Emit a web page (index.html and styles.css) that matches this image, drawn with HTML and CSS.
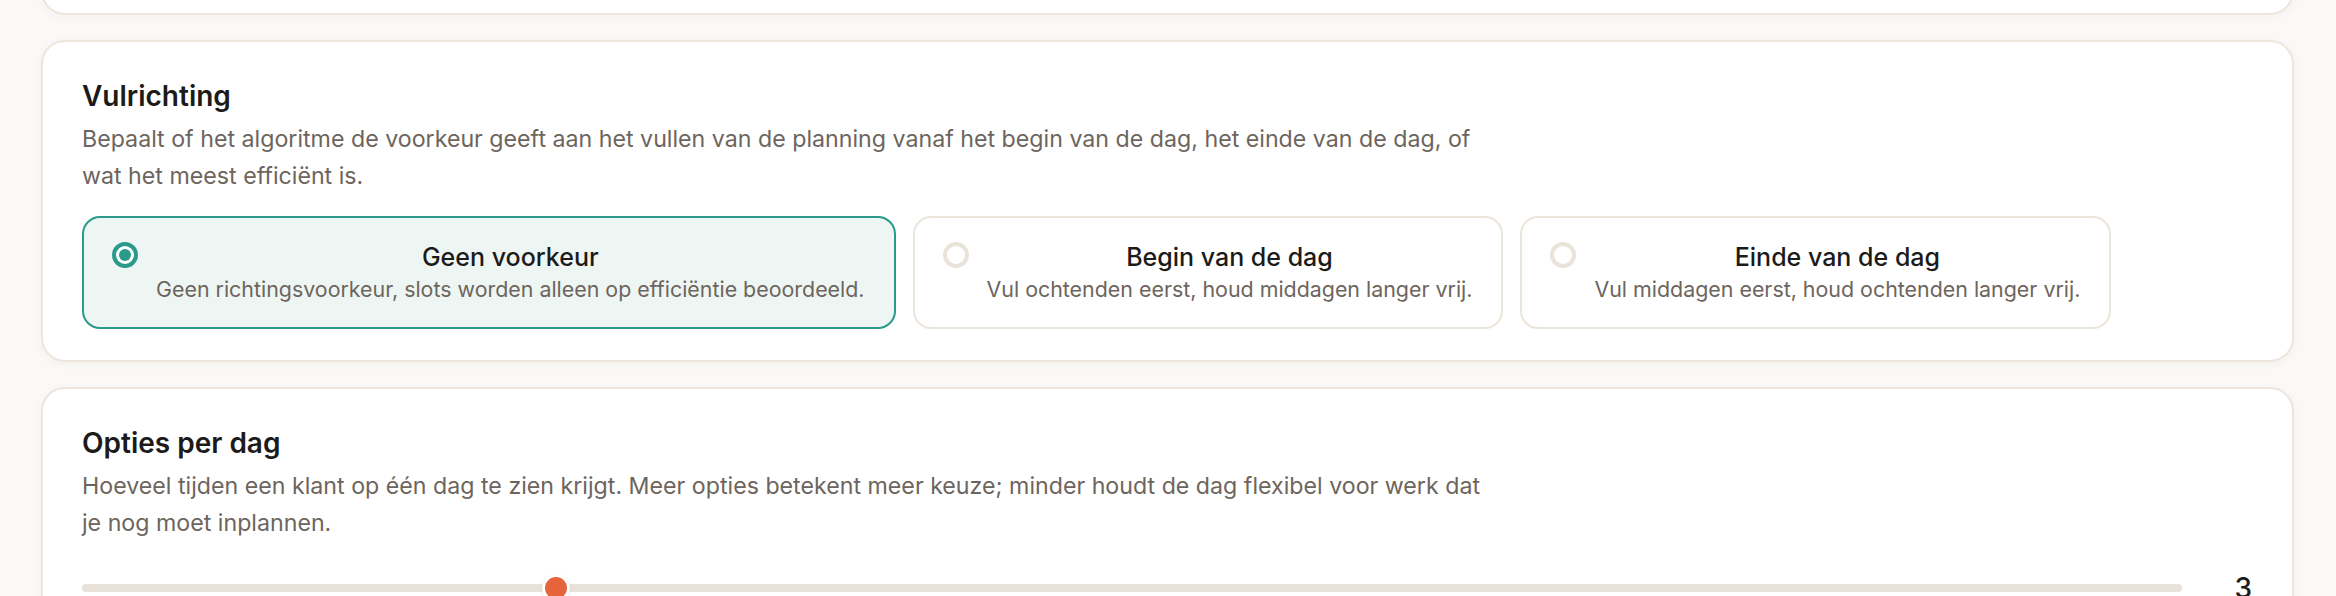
FILE: index.html
```html
<!DOCTYPE html>
<html lang="nl">
<head>
<meta charset="utf-8">
<title>Instellingen</title>
<link rel="stylesheet" href="styles.css">
</head>
<body>
<main class="page">
  <section class="card card-cut"></section>

  <section class="card">
    <h2 class="card-title">Vulrichting</h2>
    <p class="card-desc">Bepaalt of het algoritme de voorkeur geeft aan het vullen van de planning vanaf het begin van de dag, het einde van de dag, of wat het meest efficiënt is.</p>
    <div class="options">
      <div class="option option-active">
        <span class="radio radio-on"></span>
        <div class="option-body">
          <div class="option-title">Geen voorkeur</div>
          <div class="option-sub">Geen richtingsvoorkeur, slots worden alleen op efficiëntie beoordeeld.</div>
        </div>
      </div>
      <div class="option">
        <span class="radio"></span>
        <div class="option-body">
          <div class="option-title">Begin van de dag</div>
          <div class="option-sub">Vul ochtenden eerst, houd middagen langer vrij.</div>
        </div>
      </div>
      <div class="option">
        <span class="radio"></span>
        <div class="option-body">
          <div class="option-title">Einde van de dag</div>
          <div class="option-sub">Vul middagen eerst, houd ochtenden langer vrij.</div>
        </div>
      </div>
    </div>
  </section>

  <section class="card">
    <h2 class="card-title">Opties per dag</h2>
    <p class="card-desc">Hoeveel tijden een klant op één dag te zien krijgt. Meer opties betekent meer keuze; minder houdt de dag flexibel voor werk dat je nog moet inplannen.</p>
    <div class="slider-row">
      <input class="slider" type="range" min="1" max="10" value="3">
      <span class="slider-value">3</span>
    </div>
  </section>
</main>
</body>
</html>
```
FILE: styles.css
```css
html, body {
  margin: 0;
  padding: 0;
}
body {
  background: #faf9f7;
  font-family: Inter, "Noto Sans", sans-serif;
  color: #1c1b19;
  overflow: hidden;
}
.page {
  display: flex;
  flex-direction: column;
  gap: 25px;
  padding: 0 42px 0 41px;
  margin-top: -85px;
}
.card {
  background: #ffffff;
  border: 2px solid #ece6dd;
  border-radius: 24px;
  box-shadow: 0 2px 10px rgba(60, 40, 20, 0.04);
  padding: 35px 40px 31px 39px;
}
.card-cut {
  height: 100px;
  box-sizing: border-box;
  padding: 0;
}
.card-title {
  margin: 0;
  font-size: 28px;
  line-height: 38px;
  font-weight: 600;
  color: #1c1b19;
}
.card-desc {
  margin: 6px 0 0;
  max-width: 1410px;
  font-size: 23.2px;
  line-height: 36.6px;
  color: #6d655d;
}
.options {
  display: flex;
  flex-wrap: wrap;
  gap: 17px;
  margin-top: 22px;
}
.option {
  display: flex;
  align-items: flex-start;
  gap: 18px;
  padding: 24px 29px 24px 28px;
  border: 2px solid #ebe5dc;
  border-radius: 18px;
  background: #ffffff;
}
.option-active {
  border-color: #2a9a8b;
  background: #eef6f4;
}
.radio {
  flex: none;
  width: 26px;
  height: 26px;
  box-sizing: border-box;
  border: 4px solid #e9e3da;
  border-radius: 50%;
  background: #ffffff;
  display: flex;
  align-items: center;
  justify-content: center;
}
.radio-on {
  border-color: #2a9a8b;
}
.radio-on::after {
  content: "";
  width: 12px;
  height: 12px;
  border-radius: 50%;
  background: #2a9a8b;
}
.option-body {
  text-align: center;
}
.option-title {
  font-size: 25px;
  line-height: 30px;
  font-weight: 500;
  color: #1c1b19;
}
.option-sub {
  margin-top: 3px;
  font-size: 21.4px;
  line-height: 28px;
  color: #6d655d;
}
.slider-row {
  display: flex;
  align-items: center;
  gap: 46px;
  margin-top: 30px;
}
.slider {
  flex: 1;
  margin: 0;
  height: 30px;
  -webkit-appearance: none;
  appearance: none;
  background: transparent;
}
.slider::-webkit-slider-runnable-track {
  height: 8px;
  border-radius: 4px;
  background: #e8e2da;
}
.slider::-webkit-slider-thumb {
  -webkit-appearance: none;
  appearance: none;
  width: 28px;
  height: 28px;
  margin-top: -10px;
  border-radius: 50%;
  background: #e5643b;
  border: 3px solid #ffffff;
  box-sizing: border-box;
  box-shadow: 0 1px 3px rgba(0, 0, 0, 0.12);
}
.slider-value {
  min-width: 24px;
  text-align: right;
  font-size: 28px;
  font-weight: 500;
  color: #1c1b19;
}
```
